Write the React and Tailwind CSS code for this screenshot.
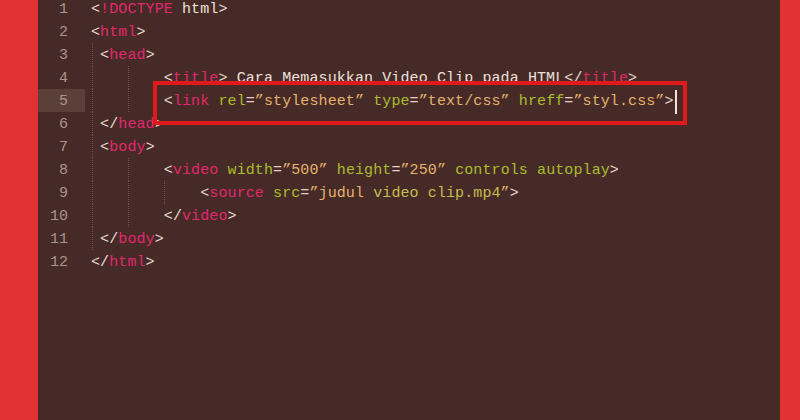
import React from 'react';

const colors = {
  b: 'text-[#eadbd2]',
  t: 'text-[#e2286c]',
  a: 'text-[#a9be2e]',
  e: 'text-[#e9cfc8]',
  s: 'text-[#e4b36e]',
  o: 'text-[#c4bf4c]',
  p: 'text-[#eee2da]',
};

const guideLeft = {
  0: 'left-[0px]',
  4: 'left-[36px]',
  8: 'left-[72px]',
};

const lines = [
  { guides: [], parts: [['b', '<'], ['t', '!DOCTYPE'], ['p', ' html'], ['b', '>']] },
  { guides: [], parts: [['b', '<'], ['t', 'html'], ['b', '>']] },
  { guides: [0], parts: [['p', ' '], ['b', '<'], ['t', 'head'], ['b', '>']] },
  {
    guides: [0, 4],
    parts: [
      ['p', '        '], ['b', '<'], ['t', 'title'], ['b', '>'],
      ['p', ' Cara Memasukkan Video Clip pada HTML'],
      ['b', '</'], ['t', 'title'], ['b', '>'],
    ],
  },
  {
    guides: [0, 4],
    active: true,
    cursor: true,
    parts: [
      ['p', '        '], ['b', '<'], ['t', 'link'],
      ['p', ' '], ['a', 'rel'], ['e', '='], ['s', '”stylesheet”'],
      ['p', ' '], ['a', 'type'], ['e', '='], ['s', '”text/css”'],
      ['p', ' '], ['a', 'hreff'], ['e', '='], ['s', '”styl.css”'],
      ['b', '>'],
    ],
  },
  { guides: [0], parts: [['p', ' '], ['b', '</'], ['t', 'head'], ['b', '>']] },
  { guides: [0], parts: [['p', ' '], ['b', '<'], ['t', 'body'], ['b', '>']] },
  {
    guides: [0, 4],
    parts: [
      ['p', '        '], ['b', '<'], ['t', 'video'],
      ['p', ' '], ['a', 'width'], ['e', '='], ['s', '”500”'],
      ['p', ' '], ['a', 'height'], ['e', '='], ['s', '”250”'],
      ['a', ' controls autoplay'], ['b', '>'],
    ],
  },
  {
    guides: [0, 4, 8],
    parts: [
      ['p', '            '], ['b', '<'], ['t', 'source'],
      ['p', ' '], ['a', 'src'], ['e', '='], ['s', '”judul'], ['o', ' video clip.mp4'], ['s', '”'],
      ['b', '>'],
    ],
  },
  { guides: [0, 4], parts: [['p', '        '], ['b', '</'], ['t', 'video'], ['b', '>']] },
  { guides: [0], parts: [['p', ' '], ['b', '</'], ['t', 'body'], ['b', '>']] },
  { guides: [], parts: [['b', '</'], ['t', 'html'], ['b', '>']] },
];

const App = () => {
  return (
    <div className="w-[800px] h-[420px] overflow-hidden bg-[#e23133] flex">
      <div className="relative ml-[38px] w-[742px] h-full bg-[#462a27] font-['Liberation_Mono',monospace] text-[15px] leading-[17px]">
        <div className="-mt-[3px] flex flex-col">
          {lines.map((line, i) => (
            <div key={i} className="flex h-[23px]">
              <div
                className={
                  'w-[47px] h-full flex items-start pt-[4px] justify-end pr-[17px] text-[#ab948b] ' +
                  (line.active ? 'bg-[#5b3f39]' : '')
                }
              >
                {i + 1}
              </div>
              <div className="relative h-full flex items-start pt-[4px] pl-[6px] whitespace-pre tracking-[0.1px]">
                {line.guides.map((g) => (
                  <span
                    key={g}
                    className={
                      'absolute top-0 bottom-0 ml-[7px] border-l border-dotted border-[#6e544b] ' + guideLeft[g]
                    }
                  />
                ))}
                {line.parts.map(([k, txt], j) => (
                  <span key={j} className={colors[k]}>
                    {txt}
                  </span>
                ))}
                {line.cursor && <span className="ml-px -mt-[3px] inline-block w-[2px] h-[24px] bg-[#efe4dc]" />}
              </div>
            </div>
          ))}
        </div>
        <div className="absolute left-[115px] top-[81px] w-[534px] h-[44px] border-[4px] border-[#e01a1a]" />
      </div>
    </div>
  );
};

export default App;
